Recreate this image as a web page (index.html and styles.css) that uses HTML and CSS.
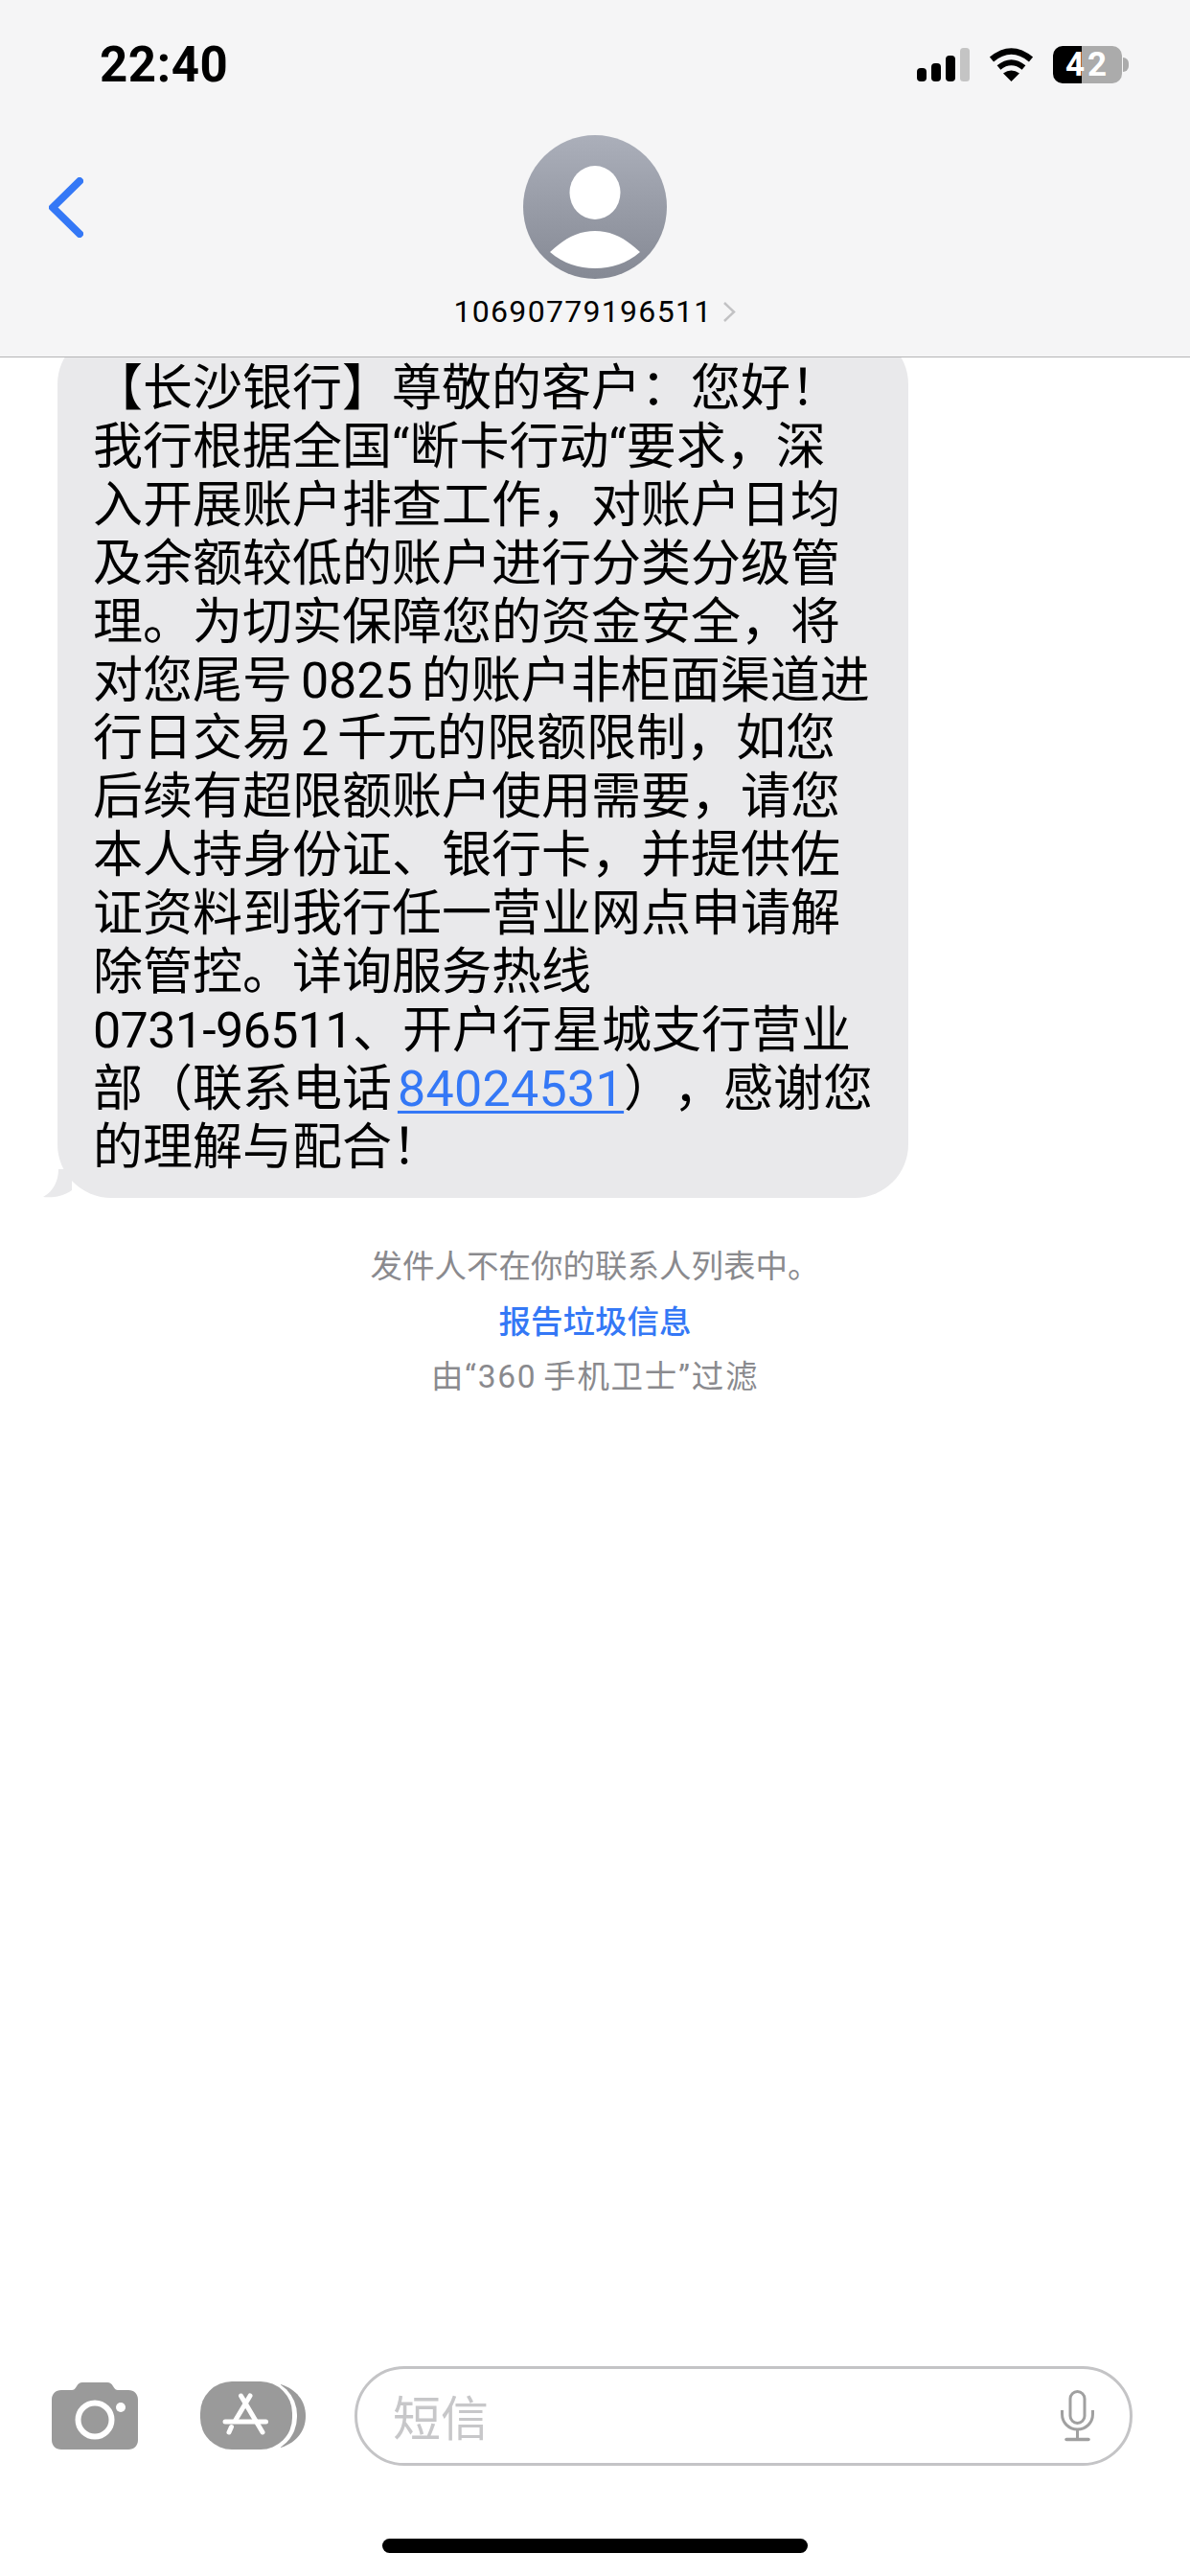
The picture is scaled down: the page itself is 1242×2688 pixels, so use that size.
FILE: index.html
```html
<!DOCTYPE html>
<html lang="zh-CN">
<head>
<meta charset="utf-8">
<title>信息</title>
<link rel="stylesheet" href="styles.css">
</head>
<body>
<div class="screen">
  <header class="header">
    <div class="status">
      <span class="time">22:40</span>
      <div class="status-icons">
        <svg class="signal" width="55" height="36" viewBox="0 0 55 36">
          <rect x="0" y="21" width="10" height="14" rx="4" fill="#000"/>
          <rect x="15" y="16" width="10" height="19" rx="4" fill="#000"/>
          <rect x="30" y="8" width="10" height="27" rx="4" fill="#000"/>
          <rect x="45" y="0" width="10" height="35" rx="3.5" fill="#c4c4c4"/>
        </svg>
        <svg class="wifi" width="47" height="36" viewBox="0 0 47 36">
          <path d="M3 13Q23.500-4 44 13" fill="none" stroke="#000" stroke-width="6.500"/>
          <path d="M10.500 21.500Q23.500 11 36.500 21.500" fill="none" stroke="#000" stroke-width="6"/>
          <path d="M23.500 36L15 27.500Q23.500 21.500 32 27.500Z" fill="#000"/>
        </svg>
        <div class="battery">42</div>
      </div>
    </div>
    <div class="nav">
      <svg class="back" width="36" height="63" viewBox="0 0 36 63">
        <path d="M32 4L4 31.500L32 59" fill="none" stroke="#3478f6" stroke-width="8" stroke-linecap="round" stroke-linejoin="round"/>
      </svg>
      <div class="contact">
        <svg class="avatar" width="150" height="150" viewBox="0 0 150 150">
          <defs>
            <linearGradient id="avatarFill" x1="0" y1="0" x2="0" y2="1">
              <stop offset="0" stop-color="#abafba"/>
              <stop offset="1" stop-color="#858994"/>
            </linearGradient>
          </defs>
          <circle cx="75" cy="75" r="75" fill="url(#avatarFill)"/>
          <ellipse cx="75" cy="60" rx="26.500" ry="28" fill="#fff"/>
          <path d="M28 122C44 107 58 100 75 100C92 100 106 107 122 122C108 134 92 139 75 139C58 139 42 134 28 122Z" fill="#fff"/>
        </svg>
        <div class="name-row">
          <span class="name">10690779196511</span>
          <svg class="name-chevron" width="14" height="23" viewBox="0 0 14 23">
            <path d="M2 2L12 11.500L2 21" fill="none" stroke="#c2c2c4" stroke-width="2.500"/>
          </svg>
        </div>
      </div>
      <div class="nav-spacer"></div>
    </div>
  </header>

  <main class="thread">
    <div class="bubble">
      <svg class="tail" width="30" height="30" viewBox="0 0 30 30">
        <path d="M16 0C16 12 11 23 0 29C9 30 20 29 30 22L30 0Z" fill="#e9e9eb"/>
      </svg>
      <p class="message">【长沙银行】尊敬的客户：您好！<br>我行根据全国“断卡行动“要求，深<br>入开展账户排查工作，对账户日均<br>及余额较低的账户进行分类分级管<br>理。为切实保障您的资金安全，将<br>对您尾号 0825 的账户非柜面渠道进<br>行日交易 2 千元的限额限制，如您<br>后续有超限额账户使用需要，请您<br>本人持身份证、银行卡，并提供佐<br>证资料到我行任一营业网点申请解<br>除管控。详询服务热线<br><span class="hotline">0731-96511</span>、开户行星城支行营业<br>部（联系电话 <a class="phone" href="#">84024531</a>），感谢您<br>的理解与配合！</p>
    </div>
    <div class="notice">
      <p class="notice-line">发件人不在你的联系人列表中。</p>
      <p class="notice-line notice-link">报告垃圾信息</p>
      <p class="notice-line notice-filter">由“360 手机卫士”过滤</p>
    </div>
  </main>

  <footer class="composer">
    <svg class="camera" width="90" height="70" viewBox="0 0 90 70">
      <path d="M10 8H21C23 8 24 7 26 4C28 1 29 0 32 0H58C61 0 62 1 64 4C66 7 67 8 69 8H80C86 8 90 12 90 18V60C90 66 86 70 80 70H10C4 70 0 66 0 60V18C0 12 4 8 10 8Z" fill="#9a9a9a"/>
      <ellipse cx="45" cy="39" rx="17.500" ry="17.500" fill="none" stroke="#fff" stroke-width="6"/>
      <circle cx="72" cy="26" r="5" fill="#fff"/>
    </svg>
    <svg class="apps" width="110" height="72" viewBox="0 0 110 72">
      <path d="M84 3C100 8 110 20 110 36C110 52 100 64 84 69Z" fill="#9a9a9a"/>
      <rect x="-4" y="-3" width="105" height="78" rx="38" fill="#fff"/>
      <rect x="0" y="0" width="96" height="71" rx="33" fill="#9a9a9a"/>
      <g fill="none" stroke="#fff" stroke-width="5" stroke-linecap="round">
        <path d="M42.500 15L65 53"/>
        <path d="M52 15L37 40"/>
        <path d="M32.500 47.500L30 53"/>
        <path d="M26 42H68.500"/>
      </g>
    </svg>
    <div class="input">
      <span class="placeholder">短信</span>
      <svg class="mic" width="37" height="54" viewBox="0 0 37 54">
        <rect x="11" y="1.500" width="15" height="33" rx="7.500" fill="none" stroke="#a0a0a0" stroke-width="3"/>
        <path d="M2.500 21V25C2.500 34 9.500 41 18.500 41C27.500 41 34.500 34 34.500 25V21" fill="none" stroke="#a0a0a0" stroke-width="3"/>
        <path d="M18.500 41V51" fill="none" stroke="#a0a0a0" stroke-width="3"/>
        <path d="M7 51.500H30" fill="none" stroke="#a0a0a0" stroke-width="3.500" stroke-linecap="round"/>
      </svg>
    </div>
  </footer>
  <div class="home-row"><div class="home-indicator"></div></div>
</div>
</body>
</html>
```
FILE: styles.css
```css
* {
  box-sizing: border-box;
}

html,
body {
  margin: 0;
  padding: 0;
  background: #fff;
}

body {
  font-family: Roboto, "Noto Sans CJK SC", sans-serif;
  color: #000;
  text-spacing-trim: space-all;
}

.screen {
  width: 1242px;
  height: 2688px;
  display: flex;
  flex-direction: column;
  overflow: hidden;
}

.header {
  position: relative;
  z-index: 2;
  height: 373px;
  background: #f5f5f6;
  border-bottom: 1px solid #b4b4b6;
  flex: none;
}

.status {
  display: flex;
  align-items: flex-start;
  justify-content: space-between;
  height: 141px;
  padding: 48px 71px 0 104px;
}

.time {
  font-size: 51px;
  font-weight: 700;
  line-height: 40px;
  letter-spacing: 0.6px;
}

.status-icons {
  display: flex;
  align-items: flex-start;
  gap: 20px;
}

.signal {
  margin-top: 2px;
}

.wifi {
  margin-top: 1px;
}

.battery {
  position: relative;
  width: 72px;
  height: 39px;
  border-radius: 10px;
  background: linear-gradient(90deg, #000 0, #000 30px, #ababab 30px, #ababab 100%);
  color: #fff;
  font-size: 35px;
  font-weight: 700;
  line-height: 39px;
  text-align: center;
  letter-spacing: 3px;
}

.battery::after {
  content: "";
  position: absolute;
  left: 73px;
  top: 12px;
  width: 6px;
  height: 15px;
  background: #ababab;
  border-radius: 0 8px 8px 0;
}

.nav {
  display: grid;
  grid-template-columns: 1fr auto 1fr;
  align-items: start;
}

.back {
  display: block;
  margin: 44px 0 0 51px;
}

.contact {
  display: flex;
  flex-direction: column;
  align-items: center;
}

.avatar {
  display: block;
}

.name-row {
  display: flex;
  align-items: center;
  gap: 11px;
  margin-top: 18px;
  height: 32px;
}

.name {
  font-size: 32px;
  line-height: 32px;
  letter-spacing: 1.3px;
  white-space: nowrap;
}

.name-chevron {
  flex: none;
}

.thread {
  flex: 1;
  min-height: 0;
  overflow: hidden;
}

.bubble {
  position: relative;
  width: 888px;
  margin: -28px 0 0 60px;
  padding: 31px 20px 21.400px 37px;
  background: #e9e9eb;
  border-radius: 56px;
}

.tail {
  position: absolute;
  left: -15px;
  bottom: 0;
  display: block;
}

.message {
  margin: 0;
  position: relative;
  font-size: 52px;
  line-height: 60.900px;
  word-spacing: -4px;
  white-space: nowrap;
}

.hotline {
  letter-spacing: -0.65px;
}

.phone {
  margin-left: -3px;
  letter-spacing: 0.3px;
  color: #3478f6;
  text-decoration: underline;
  text-decoration-thickness: 3px;
  text-underline-offset: 5px;
  text-decoration-skip-ink: none;
}

.notice {
  margin-top: 43px;
  text-align: center;
}

.notice-line {
  margin: 0;
  font-size: 33.500px;
  line-height: 57.500px;
  color: #8a8a8e;
}

.notice-link {
  color: #3478f6;
  font-weight: 500;
}

.notice-filter {
  letter-spacing: 1.700px;
  word-spacing: -3px;
}

.composer {
  display: flex;
  align-items: center;
  flex: none;
  height: 104px;
  padding: 0 60px 0 54px;
}

.camera {
  flex: none;
  display: block;
}

.apps {
  flex: none;
  display: block;
  margin-left: 65px;
}

.input {
  flex: 1;
  display: flex;
  align-items: center;
  justify-content: space-between;
  height: 104px;
  margin-left: 51px;
  padding: 0 36px 0 37px;
  border: 3px solid #c4c4c6;
  border-radius: 52px;
}

.placeholder {
  font-size: 50px;
  line-height: 60px;
  padding-top: 8px;
  color: #c7c7c9;
}

.home-row {
  flex: none;
  display: flex;
  justify-content: center;
  height: 115px;
  padding-top: 76px;
}

.home-indicator {
  width: 444px;
  height: 15px;
  border-radius: 8px;
  background: #000;
}
```
